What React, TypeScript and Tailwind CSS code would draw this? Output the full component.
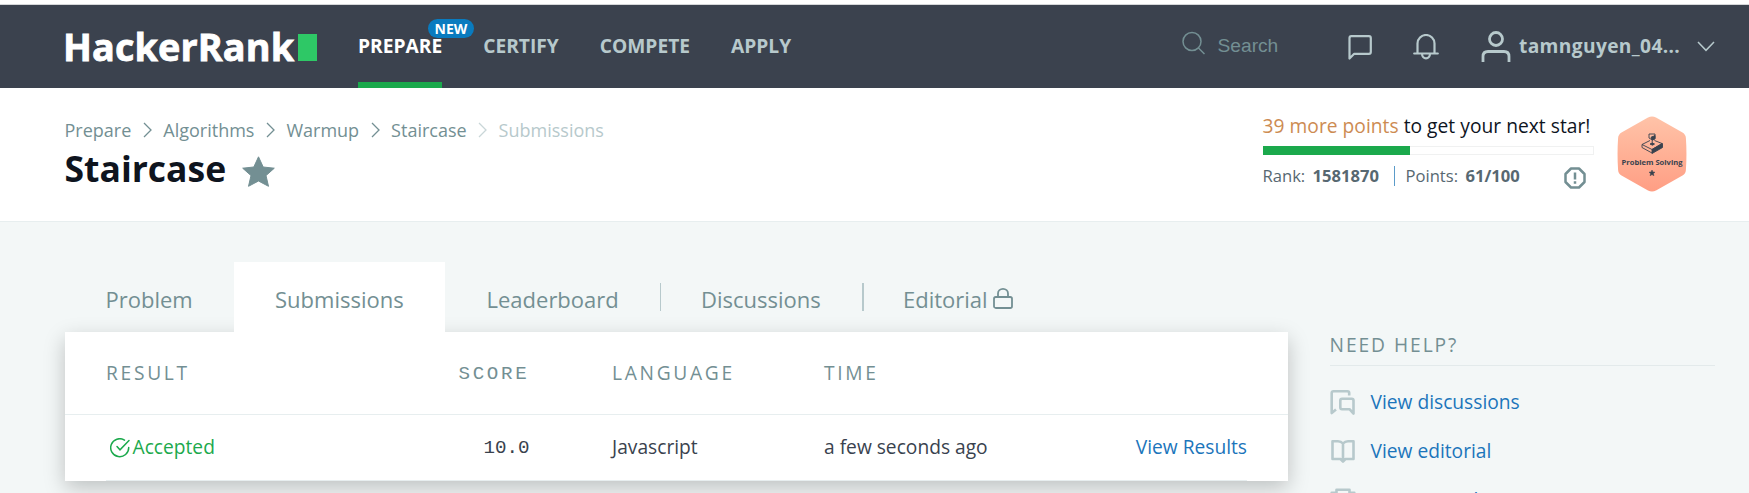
import React from "react";

const crumbs = ["Prepare", "Algorithms", "Warmup", "Staircase"];

function Crumb({ light }: { light?: boolean }) {
  return (
    <svg width="9" height="16" viewBox="0 0 9 16" fill="none" strokeWidth="1.3" className={light ? "mx-[11.5px] stroke-[#c9d6d8]" : "mx-[11.5px] stroke-[#738f93]"}>
      <path d="M1 1 L8 8 L1 15" />
    </svg>
  );
}

function NavItem({ label, active }: { label: string; active?: boolean }) {
  return (
    <a className={active ? "relative flex h-full items-center border-y-[6px] border-t-transparent border-b-[#1ba94c] text-white" : "relative flex h-full items-center border-y-[6px] border-transparent text-[#b7c9cc]"}>
      <span>{label}</span>
      {active && (
        <span className="absolute left-[70px] top-[8px] flex h-[19px] w-[46px] items-center justify-center rounded-full bg-[#097bbf] text-[14px]">NEW</span>
      )}
    </a>
  );
}

function Header() {
  return (
    <header className="flex h-[83px] items-center bg-[#3b424e] pl-[65px] text-[19.2px] font-bold">
      <div className="flex w-[293px] items-center">
        <span className="-ml-[2px] w-[235px] whitespace-nowrap text-[37.8px] leading-[38px] font-bold tracking-[0.1px] text-white [-webkit-text-stroke:0.8px_white]">HackerRank</span>
        <span className="mt-[2px] h-[27px] w-[19px] bg-[#2ec866]" />
      </div>
      <nav className="flex h-full gap-[41px]">
        <NavItem label="PREPARE" active />
        <NavItem label="CERTIFY" />
        <NavItem label="COMPETE" />
        <NavItem label="APPLY" />
      </nav>
      <div className="ml-auto flex items-center pr-[34px] text-[#b7c9cc]">
        <svg width="24" height="24" viewBox="0 0 24 24" fill="none" stroke="#738f93" strokeWidth="1.5" className="-mt-[7px]">
          <circle cx="10" cy="10.5" r="9" />
          <path d="M16.5 17 L22.5 23" />
        </svg>
        <span className="ml-[12px] w-[130.5px] font-['Liberation_Sans',sans-serif] text-[19.2px] font-normal text-[#738f93]">Search</span>
        <svg width="24" height="25" viewBox="0 0 24 25" fill="none" stroke="currentColor" strokeWidth="2.2" strokeLinejoin="round" className="mt-[1px]">
          <path d="M1.5 23.5 V3 Q1.5 1.2 3.3 1.2 H21 Q22.8 1.2 22.8 3 V17 Q22.8 18.8 21 18.8 H6.2 Z" />
        </svg>
        <svg width="26" height="26" viewBox="0 0 26 26" fill="none" stroke="currentColor" strokeWidth="2.2" strokeLinecap="round" className="ml-[41px]">
          <path d="M1.2 19.5 H24.8 M4.5 19.5 V9.5 A8.5 8.5 0 0 1 21.5 9.5 V19.5 M9 19.8 A4 4.5 0 0 0 17 19.8" />
        </svg>
        <svg width="30" height="32" viewBox="0 0 30 32" fill="none" stroke="currentColor" strokeWidth="2.8" className="ml-[42px]">
          <circle cx="15" cy="8" r="6.5" />
          <path d="M2 31 V25.5 Q2 20.5 7 20.5 H23 Q28 20.5 28 25.5 V31" />
        </svg>
        <span className="ml-[8px] w-[178px] tracking-[0.35px]">tamnguyen_04...</span>
        <svg width="18" height="11" viewBox="0 0 18 11" fill="none" stroke="currentColor" strokeWidth="1.5">
          <path d="M1 1 L9 9.3 L17 1" />
        </svg>
      </div>
    </header>
  );
}

function Badge() {
  return (
    <svg width="70" height="76" viewBox="0 0 70 76" className="ml-[23.5px]">
      <defs>
        <linearGradient id="hex" x1="0" y1="0" x2="0" y2="1">
          <stop offset="0" stopColor="#ffc3a8" />
          <stop offset="1" stopColor="#ff9e84" />
        </linearGradient>
      </defs>
      <path d="M31 1.5 Q35 -.4 39 1.5 L65.5 16.5 Q68.7 18.5 68.9 22 Q70 38 68.9 54 Q68.7 57.5 65.5 59.5 L39 74.4 Q35 76.4 31 74.4 L4.5 59.5 Q1.3 57.5 1.1 54 Q0 38 1.1 22 Q1.3 18.5 4.5 16.5 Z" fill="url(#hex)" />
      <g stroke="#39424e" strokeWidth=".9" fill="none">
        <path d="M25 28.5 L33 24.5 M37.5 24.5 L45 27.5 L35 33.5 L25 28.5 V31.5 L35 37" />
        <path d="M35 33.5 V37.5 L45.5 31.5 V27.5 Z" fill="#39424e" />
        <path d="M32 20 V18 H38 V23 L35.5 24 L32 22 Z M35.2 20 V28" />
        <path d="M34 21.5 L38 19.5 V22.5 L35.5 24 Z M33 28 L35.5 27 L37.5 28 L35.5 29.2 Z" fill="#39424e" />
      </g>
      <text x="35" y="49" textAnchor="middle" textLength="61" fill="#39424e" className="font-['Open_Sans',sans-serif] text-[7.6px] font-bold">Problem Solving</text>
      <path d="M35 54 L35.9 56 L38 56.2 L36.4 57.6 L36.9 59.7 L35 58.6 L33.1 59.7 L33.6 57.6 L32 56.2 L34.1 56 Z" fill="#39424e" stroke="#39424e" strokeWidth=".5" />
    </svg>
  );
}

function PageHead() {
  return (
    <section className="flex h-[134px] justify-between border-b border-[#e7eeef] bg-white pl-[64.5px] pr-[62px]">
      <div className="pt-[28px]">
        <div className="flex h-[28px] items-center text-[18px] text-[#738f93]">
          {crumbs.map((c, i) => (
            <React.Fragment key={c}>
              <span>{c}</span>
              <Crumb light={i === 3} />
            </React.Fragment>
          ))}
          <span className="text-[#b7c9cc]">Submissions</span>
        </div>
        <div className="flex h-[48px] items-center">
          <h1 className="mt-[2px] w-[177.5px] text-[35.5px] font-bold text-[#0e141e]">Staircase</h1>
          <svg width="33" height="31" viewBox="0 0 33 31" fill="#738f93" stroke="#738f93" strokeWidth="1" strokeLinejoin="round" className="mt-[6px]">
            <path d="M16.5 .8 L21.2 11 L32.3 12.2 L24 19.6 L26.5 30.3 L16.5 25 L6.5 30.3 L9 19.6 L.7 12.2 L11.8 11 Z" />
          </svg>
        </div>
      </div>
      <div className="flex pt-[24px]">
        <div className="w-[331px]">
          <div className="flex h-[29px] items-center whitespace-nowrap text-[19.2px] tracking-[0.03px] text-[#0e141e]">
            <p><span className="text-[#cd8b52]">39 more points</span> to get your next star!</p>
          </div>
          <div className="mt-[5px] h-[9px] border border-[#f0f1f1] bg-white">
            <div className="-ml-px -mt-px h-[9px] w-[147px] bg-[#1ba94c]" />
          </div>
          <div className="mt-[9px] flex h-[24px] items-center text-[16.6px] text-[#576871]">
            <span className="w-[50px]">Rank:</span>
            <b className="w-[81px]">1581870</b>
            <span className="h-[20px] w-px bg-[#5b9bc9]" />
            <span className="ml-[11px] w-[60px]">Points:</span>
            <b className="w-[98px]">61/100</b>
            <svg width="22" height="22" viewBox="0 0 22 22" fill="none" stroke="#738f93" strokeWidth="2.5" strokeLinejoin="round" className="mt-[3px]">
              <path d="M7 1.5 H15 L20.5 7 V15 L15 20.5 H7 L1.5 15 V7 Z M11 5.5 V12.5 M11 14.3 V16.8" />
            </svg>
          </div>
        </div>
        <div className="pt-[3.5px]"><Badge /></div>
      </div>
    </section>
  );
}

function Tabs() {
  return (
    <div className="flex h-[70px] text-[22px] text-[#738f93]">
      <a className="flex w-[169px] items-center pl-[40.5px] pt-[5px]">Problem</a>
      <a className="relative z-10 flex w-[211px] items-center bg-white pl-[41px] pt-[5px]">Submissions</a>
      <a className="flex w-[215px] items-center pl-[41.5px] pt-[5px]">Leaderboard</a>
      <span className="mt-[21px] h-[28px] w-px bg-[#b7c9cc]" />
      <a className="flex w-[201px] items-center pl-[40px] pt-[5px]">Discussions</a>
      <span className="mt-[21px] h-[28px] w-[2px] bg-[#b7c9cc]" />
      <a className="flex items-center pl-[39px] pt-[5px]">
        Editorial
        <svg width="20" height="21" viewBox="0 0 20 21" fill="none" stroke="currentColor" strokeWidth="1.8" className="-mt-[2px] ml-[5px]">
          <rect x="1" y="9" width="18" height="11" rx="1.8" />
          <path d="M5 9 V5.5 A5 4.6 0 0 1 15 5.5 V9" />
        </svg>
      </a>
    </div>
  );
}

function Table() {
  return (
    <div className="h-[149px] w-[1223px] bg-white text-[19.2px] shadow-[0_7px_20px_rgba(0,0,0,0.22)]">
      <div className="grid h-[83px] grid-cols-[264px_242px_212px_1fr] items-center border-b border-[#e7eeef] px-[41px] tracking-[2.7px] text-[#738f93]">
        <span>RESULT</span>
        <span className="pr-[82.5px] pt-[2px] text-right font-['Liberation_Mono',monospace]">SCORE</span>
        <span>LANGUAGE</span>
        <span>TIME</span>
      </div>
      <div className="mx-[41px] grid h-[66px] grid-cols-[264px_242px_212px_1fr_auto] items-center border-b border-[#e7eeef] text-[#39424e]">
        <span className="flex items-center pl-[3.5px] text-[#1ba94c]">
          <svg width="21" height="20" viewBox="0 0 21 20" fill="none" stroke="currentColor" strokeWidth="1.5" strokeLinecap="round" className="mr-[2px] mt-[1px]">
            <path d="M14.5 2.1 A9 9 0 1 0 18.7 9.5" />
            <path d="M7 8.5 L10 11.8 L19 2.5" />
          </svg>
          Accepted
        </span>
        <span className="pr-[82.5px] pt-[2px] text-right font-['Liberation_Mono',monospace]">10.0</span>
        <span>Javascript</span>
        <span>a few seconds ago</span>
        <a className="text-[#1b75bb]">View Results</a>
      </div>
    </div>
  );
}

const links = [
  {
    label: "View discussions",
    icon: (
      <>
        <path d="M6 19.5 L1.7 23 V3 Q1.7 1.3 3.4 1.3 H17.5 Q19.2 1.3 19.2 3 V5.5" />
        <path d="M23.5 23.5 V10.5 Q23.5 8.8 21.8 8.8 H12 Q10.3 8.8 10.3 10.5 V17.5 Q10.3 19.2 12 19.2 H19.5 Z" />
      </>
    ),
  },
  {
    label: "View editorial",
    icon: <path d="M13 4.5 C11.5 2.8 9.5 2.3 8 2.3 H2.5 V20 H10.5 L13 22.5 L15.5 20 H23.5 V2.3 H18 C16.5 2.3 14.5 2.8 13 4.5 Z M13 4.5 V22" />,
  },
  {
    label: "View top submissions",
    icon: <path d="M6.5 1.8 H19.5 V10 A6.5 6.5 0 0 1 6.5 10 Z M6.5 4.8 H1.7 V8 Q2 11 7 12 M19.5 4.8 H24.3 V8 Q24 11 19 12 M13 17 V23 M8 23 H18" />,
  },
];

function Help() {
  return (
    <aside className="ml-[41.5px] w-[385px] text-[19.2px]">
      <div className="flex h-[34px] items-start border-b border-[#e3eaeb] leading-[26px] tracking-[1.95px] text-[#738f93]">NEED HELP?</div>
      <ul className="flex flex-col pt-[12px]">
        {links.map((l) => (
          <li key={l.label} className="flex h-[49px] items-center text-[#1b75bb]">
            <svg width="26" height="26" viewBox="0 0 26 26" fill="none" stroke="#b7c9cc" strokeWidth="2.6" strokeLinejoin="round">
              {l.icon}
            </svg>
            <span className="ml-[15px]">{l.label}</span>
          </li>
        ))}
      </ul>
    </aside>
  );
}

export default function App() {
  return (
    <div className="h-[493px] overflow-hidden bg-[#f3f7f7] font-['Open_Sans',sans-serif]">
      <div className="h-[5px] border-b border-[#d5d7d9] bg-white" />
      <Header />
      <PageHead />
      <main className="flex pl-[65px] pt-[40px]">
        <div className="flex flex-col">
          <Tabs />
          <Table />
        </div>
        <div className="pt-[70px]"><Help /></div>
      </main>
    </div>
  );
}
